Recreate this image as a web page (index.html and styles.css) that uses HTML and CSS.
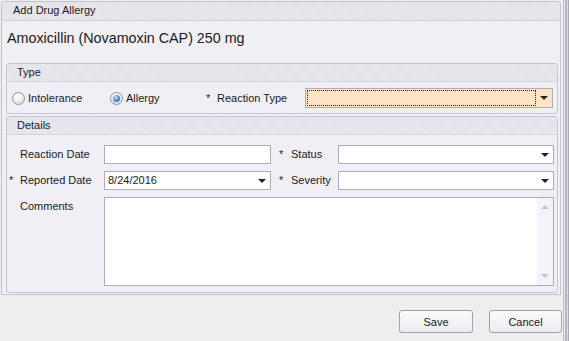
FILE: index.html
```html
<!DOCTYPE html>
<html lang="en">

<head>
    <meta charset="UTF-8">
    <meta name="viewport" content="width=device-width, initial-scale=1.0">
    <title>Add Drug Allergy</title>
    <link rel="stylesheet" href="styles.css">
</head>

<body>
    <div class="screen">
        <div class="main">
            <div class="panel">
                <div class="panel-head">Add Drug Allergy</div>
                <div class="panel-body">
                    <div class="drug">Amoxicillin (Novamoxin CAP) 250 mg</div>

                    <div class="group">
                        <div class="group-head">Type</div>
                        <div class="type-row">
                            <label class="option opt-intol"><span class="radio"></span>Intolerance</label>
                            <label class="option opt-allergy"><span class="radio checked"></span>Allergy</label>
                            <span class="star">*</span><span class="type-label">Reaction Type</span>
                            <div class="combo focus">
                                <span class="combo-text"></span>
                                <span class="arrow"></span>
                            </div>
                        </div>
                    </div>

                    <div class="group details">
                        <div class="group-head">Details</div>
                        <div class="details-grid">
                            <span></span>
                            <span class="lbl">Reaction Date</span>
                            <div class="box"></div>
                            <span></span>
                            <span class="star">*</span>
                            <span class="lbl">Status</span>
                            <div class="combo"><span class="combo-text"></span><span class="arrow"></span></div>

                            <span class="star">*</span>
                            <span class="lbl">Reported Date</span>
                            <div class="combo"><span class="combo-text">8/24/2016</span><span class="arrow"></span></div>
                            <span></span>
                            <span class="star">*</span>
                            <span class="lbl">Severity</span>
                            <div class="combo"><span class="combo-text"></span><span class="arrow"></span></div>

                            <span></span>
                            <span class="lbl lbl-top">Comments</span>
                            <div class="memo">
                                <div class="memo-text"></div>
                                <div class="memo-scroll">
                                    <span class="up"></span>
                                    <span class="down"></span>
                                </div>
                            </div>
                        </div>
                    </div>
                </div>
            </div>

            <div class="footer">
                <button type="button" class="btn btn-save">Save</button>
                <button type="button" class="btn btn-cancel">Cancel</button>
            </div>
        </div>
        <div class="frame"></div>
    </div>
</body>

</html>
```

FILE: styles.css
```css
html, body {
    margin: 0;
    padding: 0;
}

body {
    font-family: "Liberation Sans", Arial, sans-serif;
    font-size: 11px;
    color: #1b1b1b;
    background: #eeeeee;
    width: 569px;
    height: 341px;
    overflow: hidden;
}

.screen {
    display: flex;
    height: 341px;
}

.main {
    width: 562px;
    display: flex;
    flex-direction: column;
}

/* outer panel */
.panel {
    margin: 1px 0 0 1px;
    width: 560px;
    height: 294px;
    box-sizing: border-box;
    border: 1px solid #c4c3cd;
    border-radius: 3px 3px 0 0;
    background: #f0eff5;
}

.panel-head {
    height: 18px;
    line-height: 17px;
    padding-left: 11px;
    background: repeating-linear-gradient(45deg, #e7e6ed 0, #e7e6ed 1px, #e4e3ea 1px, #e4e3ea 2px);
    border-bottom: 1px solid #d2d1da;
}

.panel-body {
    padding: 0 2px 0 4px;
}

.drug {
    height: 42px;
    line-height: 20px;
    padding: 7px 0 0 1px;
    box-sizing: border-box;
    font-size: 14.3px;
    color: #202020;
}

/* group boxes */
.group {
    border: 1px solid #c6c5cf;
    border-radius: 3px;
    background: #f0eff5;
    height: 51px;
    box-sizing: border-box;
}

.group-head {
    height: 17px;
    line-height: 16px;
    padding-left: 10px;
    background: repeating-linear-gradient(45deg, #e8e7ee 0, #e8e7ee 1px, #e4e3ea 1px, #e4e3ea 2px);
    border-bottom: 1px solid #d6d5de;
    border-radius: 2px 2px 0 0;
}

.details {
    margin-top: 2px;
    height: 177px;
}

.type-row {
    display: flex;
    align-items: center;
    padding: 6px 0 0 5px;
    height: 20px;
    line-height: 18px;
}

.option {
    display: flex;
    align-items: center;
    gap: 3px;
}

.opt-intol {
    width: 98px;
}

.opt-allergy {
    width: 96px;
}

.radio {
    width: 11px;
    height: 11px;
    border-radius: 50%;
    border: 1px solid #8f95a3;
    background: radial-gradient(circle at 40% 35%, #ffffff 0, #eef0f3 45%, #c9ccd3 100%);
    position: relative;
}

.radio.checked::after {
    content: "";
    position: absolute;
    left: 2px;
    top: 2px;
    width: 7px;
    height: 7px;
    border-radius: 50%;
    background: radial-gradient(circle at 40% 35%, #cde3ff 0, #4f83d9 55%, #2a55a8 100%);
}

.star {
    width: 11px;
}

.type-label {
    width: 88px;
}

/* combo boxes and text boxes */
.combo,
.box {
    height: 19px;
    box-sizing: border-box;
    border: 1px solid #aeadb9;
    background: #ffffff;
    display: flex;
    align-items: center;
}

.type-row .combo {
    width: 248px;
    height: 20px;
}

.combo.focus {
    background: #fee4c5;
}

.combo-text {
    flex: 1;
    padding-left: 3px;
    line-height: 15px;
}

.combo.focus .combo-text {
    height: 16px;
    box-sizing: border-box;
    margin-left: 1px;
    border: 1px dotted #222;
}

.arrow {
    width: 16px;
    height: 100%;
    position: relative;
}

.arrow::after {
    content: "";
    position: absolute;
    left: 4px;
    top: 7px;
    border-left: 4px solid transparent;
    border-right: 4px solid transparent;
    border-top: 4px solid #222;
}

.details-grid {
    display: grid;
    grid-template-columns: 11px 84px 167px 8px 12px 47px 216px;
    grid-template-rows: 19px 19px 89px;
    row-gap: 7px;
    align-items: center;
    line-height: 17px;
    padding: 10px 0 0 2px;
}

.lbl-top {
    align-self: start;
    line-height: 18px;
}

.memo {
    grid-column: 3 / 8;
    height: 89px;
    box-sizing: border-box;
    border: 1px solid #aeadb9;
    background: #ffffff;
    display: flex;
    align-self: stretch;
}

.memo-text {
    flex: 1;
}

.memo-scroll {
    width: 16px;
    background: #f4f3f9;
    position: relative;
}

.memo-scroll .up,
.memo-scroll .down {
    position: absolute;
    left: 4px;
    border-left: 4px solid transparent;
    border-right: 4px solid transparent;
}

.memo-scroll .up {
    top: 7px;
    border-bottom: 4px solid #c6c5cf;
}

.memo-scroll .down {
    bottom: 7px;
    border-top: 4px solid #c6c5cf;
}

/* footer buttons */
.footer {
    display: flex;
    justify-content: flex-end;
    gap: 16px;
    padding-top: 15px;
}

.btn {
    height: 23px;
    box-sizing: border-box;
    border: 1px solid #a2a1ad;
    border-radius: 3px;
    background: linear-gradient(#fbfbfd, #ecebf1);
    font-family: "Liberation Sans", Arial, sans-serif;
    font-size: 11px;
    color: #1b1b1b;
    padding: 0;
}

.btn-save {
    width: 74px;
}

.btn-cancel {
    width: 73px;
}

/* window frame on the right */
.frame {
    width: 7px;
    background: linear-gradient(to right, #f2f2f4 0, #f2f2f4 1px, #bdbcc6 1px, #bdbcc6 2px, #e9e8ee 2px, #e9e8ee 3px, #b7b6c1 3px, #b7b6c1 5px, #dcdbe2 5px, #dcdbe2 6px, #a9a8b4 6px);
}
```
